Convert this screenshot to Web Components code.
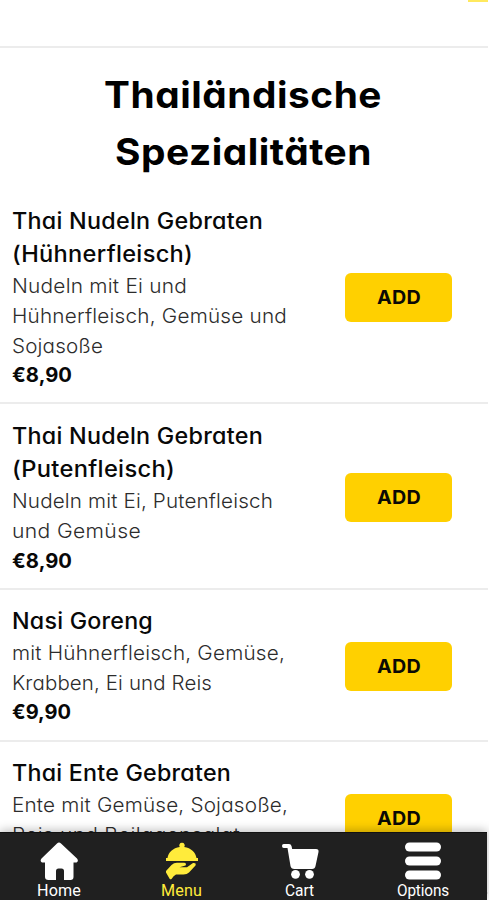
<!DOCTYPE html>
<html lang="de">
<head>
<meta charset="utf-8">
<title>Thailändische Spezialitäten</title>
<style>
html,body{margin:0;height:100%;overflow:hidden;background:#fff}
</style>
</head>
<body>
<menu-app></menu-app>
<script>
const define = (name, html, setup) => {
  const t = document.createElement('template');
  t.innerHTML = html;
  customElements.define(name, class extends HTMLElement {
    connectedCallback() {
      if (this.shadowRoot) return;
      this.attachShadow({mode: 'open'}).append(t.content.cloneNode(true));
      if (setup) setup(this, this.shadowRoot);
    }
  });
};

/* One line of text that fills the width given in "w": the glyphs are widened
   for most of the difference and the tracking takes up the rest. */
define('text-line', `
<style>:host{display:block;white-space:nowrap}span{display:inline-block;transform-origin:0 50%}</style>
<span><slot></slot></span>`, (el, root) => {
  const span = root.querySelector('span');
  const n = [...el.textContent].length;
  const target = Number(el.getAttribute('w'));
  const natural = span.getBoundingClientRect().width;
  const scale = 1 + (target / natural - 1) * 0.65;
  span.style.letterSpacing = ((target / scale - natural) / n).toFixed(3) + 'px';
  span.style.transform = 'scaleX(' + scale.toFixed(4) + ')';
  el.style.width = target + 'px';
});

define('add-button', `
<style>
:host{display:block;width:107px;height:49px;flex:none}
button{width:100%;height:100%;border:0;padding:0;border-radius:6px;background:#ffd000;color:#0b0a05;
 font:700 19px/49px Inter,"Open Sans",sans-serif;display:flex;justify-content:center}
</style>
<button><text-line w="44">ADD</text-line></button>`);

define('menu-item', `
<style>
:host{display:flex;align-items:center;justify-content:space-between;padding:14.5px 36.5px 11.6px 12px;border-bottom:2px solid #ececec}
.title{font-size:22.4px;line-height:33.5px;font-weight:530;color:#080808}
.desc{font-size:20px;line-height:29.7px;font-weight:300;color:#2c2c2c;padding-top:1.3px}
.price{font-size:20px;line-height:29.6px;font-weight:650;color:#080808}
</style>
<div><div class="title"><slot name="title"></slot></div>
<div class="desc"><slot name="desc"></slot></div>
<div class="price"><slot name="price"></slot></div></div>
<add-button></add-button>`);

define('nav-tab', `
<style>
:host{display:flex;flex-direction:column;align-items:center;color:#fff;flex:none}
:host([active]){color:#ffeb3b}
div{font:450 15.8px/18px Roboto,sans-serif}
</style>
<slot name="icon"></slot><div><slot></slot></div>`);

define('nav-bar', `
<style>
:host{display:grid;grid-template-columns:118px 127px 109px 137px;width:487px;height:68px;box-sizing:border-box;
 padding-top:9px;background:#202020;border-top:1px solid #111;box-shadow:0 -2px 9px rgba(0,0,0,.25);
 position:absolute;left:0;bottom:0}
svg{display:block;width:40px;height:40px;fill:currentColor}
</style>
<nav-tab>
 <svg slot="icon" viewBox="0 0 40 40"><path d="M20 .5Q21 .5 22 1.5L38 16.5Q40 19 37.5 20.5H34.5V35Q34.5 38 31.5 38H25V29Q25 26.5 22.5 26.5H19.5Q17 26.5 17 29V38H9.500Q6 38 6 35V20.500H3Q.5 19 2.500 16.500L18 1.500Q19 .5 20 .5Z"/></svg>
 <text-line w="44">Home</text-line></nav-tab>
<nav-tab active>
 <svg slot="icon" viewBox="0 0 40 40"><path d="M20 .8a2.600 2.600 0 0 1 2.200 4.200C29 6 33.700 10.500 34.500 16H36v3H4v-3h1.500C6.300 10.500 11 6 17.800 5A2.600 2.600 0 0 1 20 .8Z"/><path d="M4 29L9.500 23Q12 20.500 15.500 20.700H22Q25 21.100 23.500 23.600L17.500 25.200 25 25.300 31 21.100Q34.500 20.700 33.500 23.500L27 30.500Q25 32.500 21.500 32.500H14Q11.500 33.500 9.500 37Q8.500 37.800 7.600 36.800L4 30.500Z"/></svg>
 <text-line w="41">Menu</text-line></nav-tab>
<nav-tab>
 <svg slot="icon" viewBox="0 0 40 40"><path d="M3.800 2H9Q11 2 11.500 4L12.200 7H36Q39 7 38.500 10L35.500 24Q35 27 32 27H14.500Q11 27 10.500 24L7.500 6H3.800Q2 6 2 4T3.800 2Z"/><circle cx="15.500" cy="32.300" r="4.400"/><circle cx="29.500" cy="32.300" r="4.400"/></svg>
 <text-line w="29">Cart</text-line></nav-tab>
<nav-tab>
 <svg slot="icon" viewBox="0 0 40 40"><rect x="2" y=".5" width="36" height="9" rx="4.500"/><rect x="2" y="14.500" width="36" height="9" rx="4.500"/><rect x="2" y="28.500" width="36" height="9" rx="4.500"/></svg>
 <text-line w="52">Options</text-line></nav-tab>`);

define('top-bar', `
<style>
:host{display:flex;justify-content:flex-end;align-items:flex-start;height:46px;border-bottom:2px solid #ececec}
i{width:20px;height:2px;background:#ffe95e}
</style><i></i>`);

define('section-title', `
<style>
:host{display:flex;flex-direction:column;align-items:center;padding:18px 2px 9.300px 0;font-size:37px;line-height:57px;font-weight:700;color:#000}
</style><slot></slot>`);

define('menu-app', `
<style>
:host{display:block;position:relative;width:489px;height:900px;overflow:hidden;background:#fff;
 font-family:Inter,"Liberation Sans",sans-serif;font-feature-settings:"cv11"}
main{width:488px}
</style>
<main>
<top-bar></top-bar>
<section-title><text-line w="278">Thailändische</text-line><text-line w="257">Spezialitäten</text-line></section-title>
<menu-item>
 <text-line slot="title" w="251">Thai Nudeln Gebraten</text-line><text-line slot="title" w="181">(Hühnerfleisch)</text-line>
 <text-line slot="desc" w="175">Nudeln mit Ei und</text-line><text-line slot="desc" w="275">Hühnerfleisch, Gemüse und</text-line><text-line slot="desc" w="91">Sojasoße</text-line>
 <text-line slot="price" w="60">€8,90</text-line></menu-item>
<menu-item>
 <text-line slot="title" w="251">Thai Nudeln Gebraten</text-line><text-line slot="title" w="163">(Putenfleisch)</text-line>
 <text-line slot="desc" w="261">Nudeln mit Ei, Putenfleisch</text-line><text-line slot="desc" w="129">und Gemüse</text-line>
 <text-line slot="price" w="60">€8,90</text-line></menu-item>
<menu-item>
 <text-line slot="title" w="141">Nasi Goreng</text-line>
 <text-line slot="desc" w="273">mit Hühnerfleisch, Gemüse,</text-line><text-line slot="desc" w="200">Krabben, Ei und Reis</text-line>
 <text-line slot="price" w="59">€9,90</text-line></menu-item>
<menu-item>
 <text-line slot="title" w="219">Thai Ente Gebraten</text-line>
 <text-line slot="desc" w="276">Ente mit Gemüse, Sojasoße,</text-line><text-line slot="desc" w="228">Reis und Beilagensalat</text-line>
 <text-line slot="price" w="59">€9,90</text-line></menu-item>
</main>
<nav-bar></nav-bar>`);
</script>
</body>
</html>
